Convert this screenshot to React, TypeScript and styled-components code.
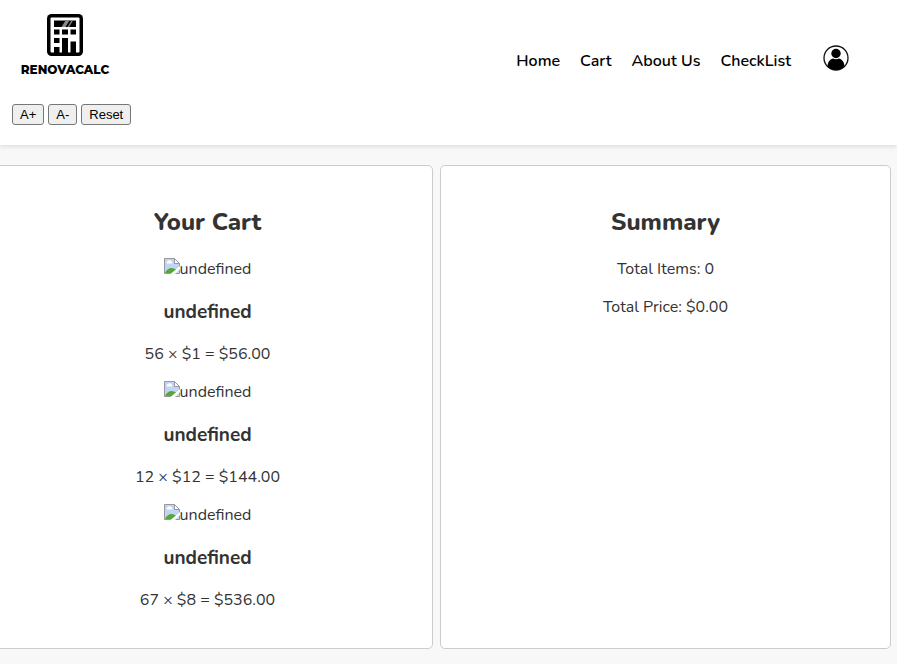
import React from "react";
import styled, { createGlobalStyle } from "styled-components";

const GlobalStyle = createGlobalStyle`
  *, *::before, *::after { box-sizing: border-box; }
  body {
    margin: 0;
    overflow-x: hidden;
    background: #f8f8f8;
    color: #333;
    font-family: Nunito, Lato, sans-serif;
    font-size: 16px;
    line-height: 22px;
  }
`;

const Header = styled.header`
  display: flex;
  flex-direction: column;
  gap: 16px;
  padding: 8px 12px 20px;
  background: #fff;
  box-shadow: 0 2px 4px rgba(0, 0, 0, 0.1);
`;

const TopBar = styled.div`
  display: flex;
  align-items: center;
  justify-content: space-between;
  height: 80px;
  padding-right: 36px;
`;

const Brand = styled.a`
  display: flex;
  flex-direction: column;
  align-items: center;
  gap: 6px;
  width: 106px;
  height: 100%;
  padding-top: 6px;
  color: #000;
  text-decoration: none;
`;

const BrandName = styled.span`
  font-family: Montserrat, Nunito, sans-serif;
  font-size: 12px;
  font-weight: 800;
  line-height: 16px;
`;

const Nav = styled.nav`
  display: flex;
  align-items: center;
  gap: 20px;
  padding-top: 26px;
`;

const NavLink = styled.a`
  color: #000;
  font-weight: 600;
  text-decoration: none;
`;

const ProfileButton = styled.button`
  display: flex;
  margin: 0 0 6px 12px;
  padding: 0;
  border: 0;
  background: none;
  cursor: pointer;
`;

const TextControls = styled.div`
  display: flex;
  gap: 4px;
`;

const SizeButton = styled.button`
  height: 21px;
  padding: 0 7px;
  border: 1px solid #767676;
  border-radius: 3px;
  background: #efefef;
  color: #000;
  font: 13px/19px "Liberation Sans", Arial, sans-serif;
`;

const CartPage = styled.main`
  display: grid;
  grid-template-columns: 1fr 1fr;
  gap: 7px;
  margin: 20px 6px 15px -18px;
`;

const Card = styled.section`
  padding: 20px 20px 21px;
  border: 1px solid #ccc;
  border-radius: 5px;
  background: #fff;
  text-align: center;
`;

const CardTitle = styled.h2`
  margin: 20px 0 19px;
  font-size: 24px;
  font-weight: 800;
  line-height: 33px;
`;

const ItemList = styled.ul`
  margin: 0;
  padding: 0;
  list-style: none;
`;

const MissingImage = styled.div`
  display: flex;
  justify-content: center;
`;

const ItemName = styled.h3`
  margin: 20px 0 18px;
  font-size: 19px;
  font-weight: 700;
  line-height: 25px;
`;

const Text = styled.p`
  margin: 0 0 16px;
`;

const items = [
  { quantity: 56, price: 1 },
  { quantity: 12, price: 12 },
  { quantity: 67, price: 8 },
];

const LogoMark = () => (
  <svg width="36" height="42" viewBox="0 0 36 42" aria-hidden="true">
    <rect width="36" height="42" rx="4.500" />
    <rect x="3.500" y="3.500" width="29" height="35" rx="1" fill="#fff" />
    <path d="M7 6.500h22v6.500H7zM7 15.500h5.500v5H7zM15 15.500h6v5h-6zM23.500 15.500H29v5h-5.500zM7 24h5.500v5H7zM7 33h5.500v6H7zM15 24h6v15h-6zM23.500 27.500H29V39h-5.500z" />
    <path d="M14.500 13l4-6.500h4l-4 6.500zM20.500 13l4-6.500h1.500l-4 6.500zM24 13l3-5" fill="#888" />
  </svg>
);

const ProfileIcon = () => (
  <svg width="26" height="26" viewBox="0 0 26 26" aria-hidden="true">
    <circle cx="13" cy="13" r="12" fill="#fff" stroke="#111" strokeWidth="1.300" />
    <circle cx="13" cy="8.500" r="4.700" />
    <path d="M4.500 21.500C4.500 17 7.500 14 10 13.500q3 1.400 6 0c2.500.500 5.500 3.500 5.500 8A12.200 12.200 0 0 1 4.500 21.500z" />
  </svg>
);

const BrokenImageIcon = () => (
  <svg width="16" height="16" viewBox="0 0 16 16" aria-hidden="true">
    <path d="M.5.500h10l5 5v10H.5z" fill="#c0d4f5" />
    <path d="M3 5.500a1.500 1.500 0 0 1 1-2.500 2 2 0 0 1 3.500.500 1.200 1.200 0 0 1 .5 2z" fill="#fff" />
    <path d="M1 15c1-3 4-5 6.500-5 2 0 4 1 5 2l-3 3z" fill="#54a833" />
    <path d="M10.500.500v5h5z" fill="#fff" />
    <path d="M.5 15.500V.5h10l5 5V15.500H.5M10.500.5v5h5" fill="none" stroke="#999" />
    <path d="M16 8v3l-5 5H6.500z" fill="#fff" />
  </svg>
);

export default function App() {
  return (
    <>
      <GlobalStyle />
      <Header>
        <TopBar>
          <Brand href="#home">
            <LogoMark />
            <BrandName>RENOVACALC</BrandName>
          </Brand>
          <Nav>
            <NavLink href="#home">Home</NavLink>
            <NavLink href="#cart">Cart</NavLink>
            <NavLink href="#about">About Us</NavLink>
            <NavLink href="#checklist">CheckList</NavLink>
            <ProfileButton type="button" aria-label="Profile">
              <ProfileIcon />
            </ProfileButton>
          </Nav>
        </TopBar>
        <TextControls>
          <SizeButton type="button">A+</SizeButton>
          <SizeButton type="button">A-</SizeButton>
          <SizeButton type="button">Reset</SizeButton>
        </TextControls>
      </Header>
      <CartPage>
        <Card>
          <CardTitle>Your Cart</CardTitle>
          <ItemList>
            {items.map(({ quantity, price }) => (
              <li key={quantity}>
                <MissingImage>
                  <BrokenImageIcon />
                  <span>undefined</span>
                </MissingImage>
                <ItemName>undefined</ItemName>
                <Text>{`${quantity} × $${price} = $${(quantity * price).toFixed(2)}`}</Text>
              </li>
            ))}
          </ItemList>
        </Card>
        <Card>
          <CardTitle>Summary</CardTitle>
          <Text>Total Items: 0</Text>
          <Text>Total Price: $0.00</Text>
        </Card>
      </CartPage>
    </>
  );
}
